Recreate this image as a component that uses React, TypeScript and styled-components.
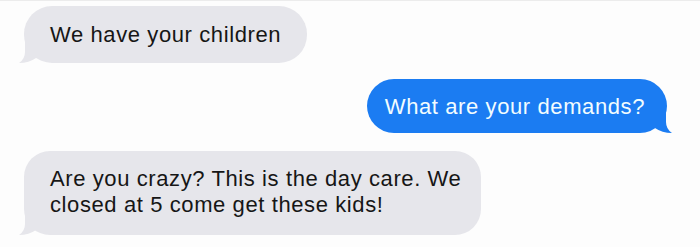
import React from 'react';
import styled, { createGlobalStyle } from 'styled-components';

const GlobalStyle = createGlobalStyle`
    html, body {
        margin: 0;
        padding: 0;
        background: #fdfdfd;
    }
    body {
        font-family: 'Liberation Sans', Arial, sans-serif;
    }
`;

const GRAY = '#e6e6eb';
const BLUE = '#1b7cf2';

const Thread = styled.div`
    width: 700px;
    height: 247px;
    box-sizing: border-box;
    padding: 5px 33px 0 24px;
    display: flex;
    flex-direction: column;
    border-top: 1px solid #ececec;
`;

const Row = styled.div<{ $mine?: boolean; $gap: number }>`
    display: flex;
    justify-content: ${(p) => (p.$mine ? 'flex-end' : 'flex-start')};
    margin-top: ${(p) => p.$gap}px;
`;

const Bubble = styled.div<{ $mine?: boolean }>`
    position: relative;
    background: ${(p) => (p.$mine ? BLUE : GRAY)};
    color: ${(p) => (p.$mine ? '#f2fcff' : '#161616')};
    font-size: 22px;
    line-height: 26px;
    letter-spacing: 0.6px;
    border-radius: 28px;
    white-space: nowrap;
`;

const Tail = styled.svg<{ $mine?: boolean }>`
    position: absolute;
    bottom: 0;
    width: 22px;
    height: 24px;
    ${(p) => (p.$mine ? 'right: -5px; transform: scaleX(-1);' : 'left: -5px;')}
`;

const BubbleTail = ({ mine, color }: { mine?: boolean; color: string }) => (
    <Tail $mine={mine} viewBox="0 0 22 24">
        <path d="M6 0 L6 13 Q6 20 0 24 Q10 24 17 19 L17 0 Z" fill={color} />
    </Tail>
);

const FirstBubble = styled(Bubble)`
    padding: 16px 26px 15px 26px;
`;

const ReplyBubble = styled(Bubble)`
    padding: 15px 22px 13px 18px;
`;

const LongBubble = styled(Bubble)`
    padding: 15px 20px 17px 26px;
    border-radius: 26px;
`;

const App = () => {
    return (
        <>
            <GlobalStyle />
            <Thread>
                <Row $gap={0}>
                    <FirstBubble>
                        We have your children
                        <BubbleTail color={GRAY} />
                    </FirstBubble>
                </Row>
                <Row $mine $gap={16}>
                    <ReplyBubble $mine>
                        What are your demands?
                        <BubbleTail mine color={BLUE} />
                    </ReplyBubble>
                </Row>
                <Row $gap={18}>
                    <LongBubble>
                        Are you crazy? This is the day care. We
                        <br />
                        closed at 5 come get these kids!
                        <BubbleTail color={GRAY} />
                    </LongBubble>
                </Row>
            </Thread>
        </>
    );
};

export default App;
